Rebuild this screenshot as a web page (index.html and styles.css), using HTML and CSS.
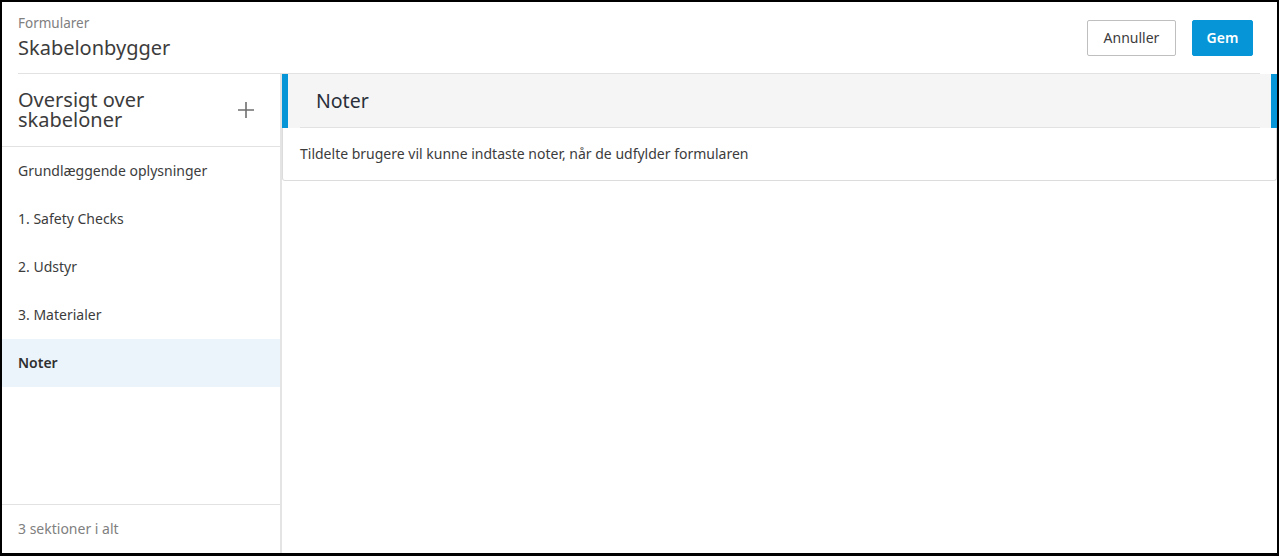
FILE: index.html
```html
<!DOCTYPE html>
<html lang="da">
<head>
<meta charset="utf-8">
<title>Skabelonbygger</title>
<link rel="stylesheet" href="styles.css">
</head>
<body>
<div class="frame">
  <header class="topbar">
    <div class="titles">
      <div class="crumb">Formularer</div>
      <h1 class="page-title">Skabelonbygger</h1>
    </div>
    <div class="actions">
      <button class="btn btn-secondary">Annuller</button>
      <button class="btn btn-primary">Gem</button>
    </div>
  </header>
  <div class="workspace">
    <aside class="sidebar">
      <div class="sidebar-head">
        <h2 class="sidebar-title">Oversigt over skabeloner</h2>
        <button class="add-btn" aria-label="Tilføj">
          <svg width="18" height="18" viewBox="0 0 18 18"><path d="M9 1v16M1 9h16" stroke="#6f6f6f" stroke-width="1.6" fill="none"/></svg>
        </button>
      </div>
      <ul class="section-list">
        <li class="section-item">Grundlæggende oplysninger</li>
        <li class="section-item">1. Safety Checks</li>
        <li class="section-item">2. Udstyr</li>
        <li class="section-item">3. Materialer</li>
        <li class="section-item is-active">Noter</li>
      </ul>
      <div class="sidebar-foot">3 sektioner i alt</div>
    </aside>
    <main class="main">
      <section class="card">
        <div class="card-head">
          <div class="card-head-inner">
            <h3 class="card-title">Noter</h3>
          </div>
        </div>
        <div class="card-body">Tildelte brugere vil kunne indtaste noter, når de udfylder formularen</div>
      </section>
    </main>
  </div>
</div>
</body>
</html>
```
FILE: styles.css
```css
* { box-sizing: border-box; }
html, body { margin: 0; padding: 0; background: #fff; }
body {
  font-family: "Noto Sans", "Open Sans", sans-serif;
  color: #3c3c3c;
}
.frame {
  width: 1279px;
  height: 556px;
  border: 2px solid #000;
  border-bottom-width: 3px;
  display: flex;
  flex-direction: column;
  overflow: hidden;
}
.topbar {
  height: 72px;
  flex: none;
  margin: 0 17px 0 16px;
  border-bottom: 1px solid #e2e2e2;
  display: flex;
  align-items: center;
  justify-content: space-between;
}
.titles { display: flex; flex-direction: column; gap: 5px; padding-bottom: 1px; }
.crumb { font-size: 13.5px; line-height: 16px; color: #808080; }
.page-title { margin: 0; font-size: 20px; line-height: 24px; font-weight: 400; color: #3c3c3c; }
.actions { display: flex; gap: 16px; margin-right: 7px; }
.btn {
  height: 36px;
  font-family: inherit;
  font-size: 14px;
  border-radius: 2px;
  cursor: pointer;
}
.btn-secondary {
  width: 89px;
  background: #fff;
  border: 1px solid #bfbfbf;
  color: #3c3c3c;
}
.btn-primary {
  width: 61px;
  background: #0696d7;
  border: 1px solid #0696d7;
  color: #fff;
  font-weight: 600;
}
.workspace { flex: 1; display: flex; min-height: 0; }
.sidebar {
  width: 280px;
  flex: none;
  border-right: 2px solid #e4e4e4;
  display: flex;
  flex-direction: column;
}
.sidebar-head {
  height: 73px;
  border-bottom: 1px solid #e2e2e2;
  display: flex;
  align-items: center;
  justify-content: space-between;
  padding: 0 16px 0 16px;
}
.sidebar-title {
  margin: 0;
  width: 180px;
  font-size: 20px;
  line-height: 20px;
  font-weight: 400;
  color: #3c3c3c;
}
.add-btn {
  background: none;
  border: 0;
  padding: 0;
  width: 18px;
  height: 18px;
  margin-right: 9px;
  display: flex;
}
.section-list { list-style: none; margin: 0; padding: 0; }
.section-item {
  height: 48px;
  display: flex;
  align-items: center;
  padding: 0 0 2px 16px;
  font-size: 14px;
  color: #3c3c3c;
}
.section-item.is-active { background: #ebf4fb; font-weight: 600; color: #2f2f2f; }
.sidebar-foot {
  margin-top: auto;
  height: 49px;
  border-top: 1px solid #e2e2e2;
  display: flex;
  align-items: center;
  padding: 0 0 2px 16px;
  font-size: 14px;
  color: #808080;
}
.main { flex: 1; min-width: 0; }
.card {
  border: 1px solid #dcdcdc;
  border-top: 0;
  border-radius: 0 0 3px 3px;
}
.card-head {
  height: 54px;
  margin: 0 -1px 0 -1px;
  background: #f5f5f5;
  border-left: 6px solid #0696d7;
  border-right: 6px solid #0696d7;
  padding: 0 11px 0 12px;
}
.card-head-inner {
  height: 54px;
  border-bottom: 1px solid #e2e2e2;
  display: flex;
  align-items: center;
  padding-left: 16px;
}
.card-title { margin: 0; font-size: 19.5px; font-weight: 400; color: #2a2f3a; }
.card-body {
  height: 52px;
  display: flex;
  align-items: center;
  padding: 0 0 2px 17px;
  font-size: 14px;
  color: #3c3c3c;
}
```
